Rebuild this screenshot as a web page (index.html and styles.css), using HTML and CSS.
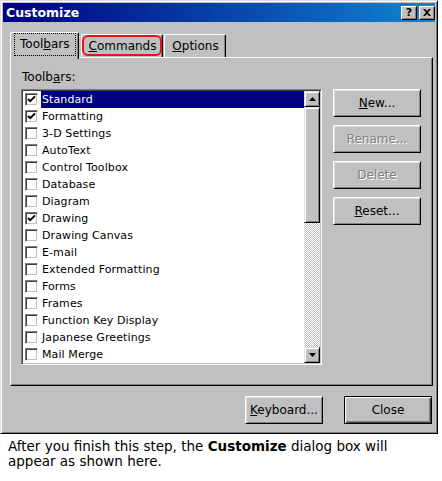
FILE: index.html
```html
<!DOCTYPE html>
<html>
<head>
<meta charset="utf-8">
<title>Customize</title>
<link rel="stylesheet" href="styles.css">
</head>
<body>
<div class="dialog">
  <div class="titlebar">
    <span class="title">Customize</span>
    <div class="caption-buttons">
      <span class="cap-btn help">?</span>
      <span class="cap-btn close">
        <svg width="8" height="7" viewBox="0 0 8 7"><path d="M0 0h2l2 2 2-2h2L5 3.5 8 7H6L4 5 2 7H0l3-3.5z" fill="#000"/></svg>
      </span>
    </div>
  </div>

  <div class="content">
    <div class="tabstrip">
      <div class="tab active"><span class="focus">Tool<u>b</u>ars</span></div>
      <div class="tab marked"><span><u>C</u>ommands</span></div>
      <div class="tab"><span><u>O</u>ptions</span></div>
    </div>

    <div class="panel">
      <div class="field-label">Toolb<u>a</u>rs:</div>
      <div class="panel-row">
        <div class="listbox">
          <div class="rows">
            <div class="row"><span class="check on"></span><span class="item selected">Standard</span></div>
            <div class="row"><span class="check on"></span><span class="item">Formatting</span></div>
            <div class="row"><span class="check"></span><span class="item">3-D Settings</span></div>
            <div class="row"><span class="check"></span><span class="item">AutoText</span></div>
            <div class="row"><span class="check"></span><span class="item">Control Toolbox</span></div>
            <div class="row"><span class="check"></span><span class="item">Database</span></div>
            <div class="row"><span class="check"></span><span class="item">Diagram</span></div>
            <div class="row"><span class="check on"></span><span class="item">Drawing</span></div>
            <div class="row"><span class="check"></span><span class="item">Drawing Canvas</span></div>
            <div class="row"><span class="check"></span><span class="item">E-mail</span></div>
            <div class="row"><span class="check"></span><span class="item">Extended Formatting</span></div>
            <div class="row"><span class="check"></span><span class="item">Forms</span></div>
            <div class="row"><span class="check"></span><span class="item">Frames</span></div>
            <div class="row"><span class="check"></span><span class="item">Function Key Display</span></div>
            <div class="row"><span class="check"></span><span class="item">Japanese Greetings</span></div>
            <div class="row"><span class="check"></span><span class="item">Mail Merge</span></div>
          </div>
          <div class="scrollbar">
            <div class="sb-btn"><svg width="7" height="4" viewBox="0 0 7 4"><path d="M3.5 0L7 4H0z" fill="#000"/></svg></div>
            <div class="sb-thumb"></div>
            <div class="sb-track"></div>
            <div class="sb-btn"><svg width="7" height="4" viewBox="0 0 7 4"><path d="M0 0h7L3.5 4z" fill="#000"/></svg></div>
          </div>
        </div>
        <div class="side-buttons">
          <button class="btn"><u>N</u>ew...</button>
          <button class="btn" disabled>Rename...</button>
          <button class="btn" disabled>Delete</button>
          <button class="btn"><u>R</u>eset...</button>
        </div>
      </div>
    </div>

    <div class="footer">
      <button class="btn keyboard"><u>K</u>eyboard...</button>
      <button class="btn default">Close</button>
    </div>
  </div>
</div>

<p class="note">After you finish this step, the <b>Customize</b> dialog box will<br>appear as shown here.</p>
</body>
</html>
```

FILE: styles.css
```css
* {
  box-sizing: border-box;
}

body {
  margin: 0;
  background: #fff;
  font-family: "DejaVu Sans", Verdana, sans-serif;
}

u {
  text-decoration: underline;
  text-underline-offset: 1px;
}

/* window frame */
.dialog {
  width: 438px;
  height: 434px;
  background: #c0c0c0;
  border: 1px solid;
  border-color: #dfdfdf #000 #000 #dfdfdf;
  box-shadow: inset 1px 1px #fff, inset -1px -1px #808080;
  padding: 2px;
  font-size: 11px;
  color: #000;
}

.titlebar {
  height: 19px;
  display: flex;
  align-items: center;
  justify-content: space-between;
  padding: 0 0 0 3px;
  background: linear-gradient(to right, #000080, #1084d0);
}

.title {
  color: #fff;
  font-weight: bold;
  font-size: 12.5px;
}

.caption-buttons {
  display: flex;
  gap: 2px;
}

.cap-btn {
  width: 16px;
  height: 14px;
  display: flex;
  align-items: center;
  justify-content: center;
  background: #c0c0c0;
  border: 1px solid;
  border-color: #fff #000 #000 #fff;
  box-shadow: inset -1px -1px #808080;
  font-weight: bold;
  font-size: 11px;
  line-height: 1;
}

.content {
  padding: 0 0 0 7px;
}

/* tabs */
.tabstrip {
  display: flex;
  align-items: flex-end;
  height: 35px;
  padding-top: 10px;
}

.tab {
  height: 23px;
  padding: 0 10px;
  display: flex;
  align-items: center;
  border-top: 1px solid #fff;
  border-left: 1px solid #fff;
  border-right: 1px solid #000;
  box-shadow: inset -1px 0 #808080;
  border-radius: 2px 2px 0 0;
  margin-left: 1px;
  font-size: 12px;
}

.tab.active {
  height: 27px;
  margin: 0 0 -2px 0;
  padding: 0 2px 3px 3px;
  position: relative;
  z-index: 1;
  background: #c0c0c0;
}

.tab.active .focus {
  border: 1px dotted #000;
  padding: 3px 6px 4px 5px;
}

.tab.marked {
  position: relative;
  width: 82px;
  margin-left: 2px;
  justify-content: center;
}

.tab.marked::after {
  content: "";
  position: absolute;
  left: 0;
  right: 0;
  top: 0;
  bottom: 1px;
  border: 2px solid #e8141c;
  border-radius: 6px;
}

.tab:nth-child(3) {
  width: 62px;
  justify-content: center;
  margin-left: 1px;
}

/* property page */
.panel {
  width: 423px;
  height: 329px;
  border: 1px solid;
  border-color: #fff #000 #000 #fff;
  box-shadow: inset -1px -1px #808080;
  padding: 12px 0 0 10px;
}

.field-label {
  font-size: 12px;
  height: 16px;
  padding-left: 1px;
}

.panel-row {
  display: flex;
  align-items: flex-start;
  margin-top: 3px;
  gap: 11px;
}

.listbox {
  width: 301px;
  display: flex;
  background: #fff;
  border: 1px solid;
  border-color: #808080 #fff #fff #808080;
  box-shadow: inset 1px 1px #404040, inset -1px -1px #c0c0c0;
  padding: 1px;
}

.rows {
  flex: 1;
}

.row {
  height: 17px;
  display: flex;
  align-items: center;
  font-size: 11px;
  letter-spacing: 0.1px;
}

.check {
  width: 13px;
  height: 13px;
  margin-left: 2px;
  flex: none;
  background: #fff;
  border: 1px solid;
  border-color: #808080 #fff #fff #808080;
  box-shadow: inset 1px 1px #404040, inset -1px -1px #c0c0c0;
}

.check.on {
  background:
    url("data:image/svg+xml;utf8,<svg xmlns='http://www.w3.org/2000/svg' width='11' height='11'><path d='M2 5l2.2 2.2L9 2.4' fill='none' stroke='black' stroke-width='2'/></svg>") center / 11px 11px no-repeat,
    #fff;
}

.item {
  flex: 1;
  height: 17px;
  line-height: 17px;
  margin-left: 3px;
  padding-left: 1px;
}

.item.selected {
  background: #000080;
  color: #fff;
}

.scrollbar {
  width: 16px;
  display: flex;
  flex-direction: column;
}

.sb-btn,
.sb-thumb {
  background: #c0c0c0;
  border: 1px solid;
  border-color: #dfdfdf #000 #000 #dfdfdf;
  box-shadow: inset 1px 1px #fff, inset -1px -1px #808080;
}

.sb-btn {
  height: 16px;
  display: flex;
  align-items: center;
  justify-content: center;
}

.sb-thumb {
  height: 116px;
}

.sb-track {
  flex: 1;
  background: repeating-conic-gradient(#fff 0 25%, #c0c0c0 0 50%) 0 0 / 2px 2px;
}

/* push buttons */
.btn {
  width: 88px;
  height: 28px;
  padding: 0;
  font-family: inherit;
  font-size: 12px;
  color: #000;
  background: #c0c0c0;
  border: 1px solid;
  border-color: #fff #000 #000 #fff;
  box-shadow: inset 1px 1px #dfdfdf, inset -1px -1px #808080;
}

.btn:disabled {
  color: #808080;
  text-shadow: 1px 1px #fff;
}

.side-buttons {
  display: flex;
  flex-direction: column;
  gap: 8px;
}

.footer {
  display: flex;
  justify-content: flex-end;
  gap: 21px;
  margin-top: 10px;
  padding-right: 3px;
}

.btn.keyboard {
  width: 78px;
}

.btn.default {
  border: 1px solid #000;
  box-shadow: inset 1px 1px #fff, inset -1px -1px #404040, inset -2px -2px #808080;
}

.note {
  margin: 5px 0 0;
  padding-left: 8px;
  font-size: 13.5px;
  line-height: 15px;
}
```
